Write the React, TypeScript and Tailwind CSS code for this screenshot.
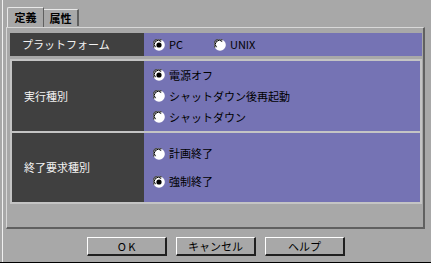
import React from "react";

const font = { fontFamily: '"Noto Sans CJK JP", "Noto Sans", sans-serif' };

function Radio({ checked, label }: { checked: boolean; label: string }) {
  return (
    <div className="flex items-center gap-[4px] h-[13px]">
      <svg width="12" height="12" viewBox="0 0 12 12" className="shrink-0">
        <circle cx="6" cy="6" r="5.8" fill="#ffffff" />
        <path d="M1.2 8.5 A5.2 5.2 0 0 1 8.5 1.2" stroke="#505050" strokeWidth="1.3" fill="none" />
        <path d="M2.5 8.2 A3.8 3.8 0 0 1 8.2 2.5" stroke="#000000" strokeWidth="1" fill="none" />
        {checked && <circle cx="6" cy="6" r="2.6" fill="#000000" />}
      </svg>
      <span className="text-[11px] leading-none text-black">{label}</span>
    </div>
  );
}

function Label({ text, w }: { text: string; w: string }) {
  return (
    <div className={`${w} shrink-0 bg-[#404040] flex items-center pl-[12px] text-[11px] text-[#f2f2f2]`}>
      {text}
    </div>
  );
}

function Button({ text }: { text: string }) {
  return (
    <div className="w-[80px] h-[19px] border-t border-l border-t-white border-l-white border-r-2 border-b-2 border-r-[#202020] border-b-[#202020] flex items-center justify-center text-[11px] text-black">
      {text}
    </div>
  );
}

export default function App() {
  return (
    <div style={font} className="w-[431px] h-[263px] bg-[#a8a8a8] flex border-b border-b-black overflow-hidden">
      <div className="w-[2px] shrink-0" />
      <div className="flex-1 border-l border-l-[#f0f0f0] flex flex-col pl-[3px]">
        <div className="flex items-end h-[27px] pl-[1px]">
          <div className="w-[37px] h-[20px] border-t border-l border-t-[#e8e8e8] border-l-[#e8e8e8] border-r border-r-[#606060] rounded-tl-[2px] flex items-center justify-center text-[11px] font-bold text-black">
            定義
          </div>
          <div className="w-[35px] h-[17px] border-t border-t-[#e8e8e8] border-r-2 border-r-[#606060] mb-[1px] flex items-center justify-center text-[11px] font-bold text-black">
            属性
          </div>
        </div>
        <div className="w-[419px] h-[202px] border-t border-l border-t-[#d8d8d8] border-l-[#d8d8d8] border-r-2 border-b-2 border-r-[#606060] border-b-[#606060] pt-[5px] pl-[3px] flex flex-col gap-[3px]">
          <div className="w-[412px] h-[23px] flex">
            <Label w="w-[134px]" text="プラットフォーム" />
            <div className="flex-1 bg-[#7573b4] flex items-center pl-[9px] gap-[31px]">
              <Radio checked label="PC" />
              <Radio checked={false} label="UNIX" />
            </div>
          </div>
          <div className="w-[412px] border-2 border-[#c4c4c4] flex flex-col gap-[2px] bg-[#c4c4c4]">
            <div className="h-[70px] flex">
              <Label w="w-[132px]" text="実行種別" />
              <div className="flex-1 bg-[#7573b4] flex flex-col justify-center pl-[9px] gap-[8px]">
                <Radio checked label="電源オフ" />
                <Radio checked={false} label="シャットダウン後再起動" />
                <Radio checked={false} label="シャットダウン" />
              </div>
            </div>
            <div className="h-[69px] flex">
              <Label w="w-[132px]" text="終了要求種別" />
              <div className="flex-1 bg-[#7573b4] flex flex-col justify-center pl-[9px] gap-[15px]">
                <Radio checked={false} label="計画終了" />
                <Radio checked label="強制終了" />
              </div>
            </div>
          </div>
        </div>
        <div className="flex gap-[9px] pl-[81px] pt-[8px]">
          <Button text="O K" />
          <Button text="キャンセル" />
          <Button text="ヘルプ" />
        </div>
      </div>
    </div>
  );
}
